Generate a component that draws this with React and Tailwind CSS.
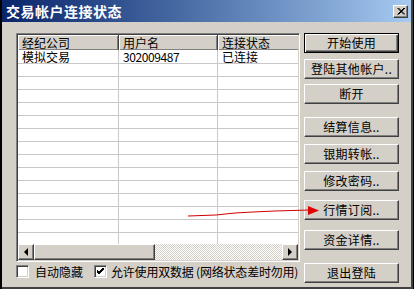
import React from 'react';

const raised =
  'bg-[#d4d0c8] border border-t-white border-l-white border-r-[#404040] border-b-[#404040] shadow-[inset_-1px_-1px_#808080]';

const buttons = [
  { label: '开始使用', cls: 'mt-[11px]', def: true },
  { label: '登陆其他帐户..', cls: 'mt-[6px]' },
  { label: '断开', cls: 'mt-[5px]' },
  { label: '结算信息..', cls: 'mt-[13px]' },
  { label: '银期转帐..', cls: 'mt-[7px]' },
  { label: '修改密码..', cls: 'mt-[7px]' },
  { label: '行情订阅..', cls: 'mt-[9px]' },
  { label: '资金详情..', cls: 'mt-[10px]' },
  { label: '退出登陆', cls: 'mt-[13px]' },
];

const WinButton = ({ label, cls, def }) => (
  <div
    className={`${cls} h-[20px] w-[95px] flex items-center justify-center text-[12px] leading-none text-black ${
      def
        ? 'bg-[#d4d0c8] border border-black shadow-[inset_1px_1px_#fff,inset_-1px_-1px_#404040,inset_-2px_-2px_#808080]'
        : raised
    }`}
  >
    <span className="tracking-[0.3px]">{label}</span>
  </div>
);

const Arrow = ({ dir }) => (
  <div className={`w-[16px] h-[16px] shrink-0 flex items-center justify-center ${raised}`}>
    <svg width="6" height="8" viewBox="0 0 6 8">
      {dir === 'left' ? <polygon points="5,0 5,8 1,4" fill="#000" /> : <polygon points="1,0 1,8 5,4" fill="#000" />}
    </svg>
  </div>
);

const ListView = () => {
  const rows = Array.from({ length: 15 });
  return (
    <div className="h-[229px] w-[284px] bg-white border border-t-[#808080] border-l-[#808080] border-r-white border-b-white shadow-[inset_1px_1px_#404040,inset_-1px_-1px_#d4d0c8] p-[1px] flex flex-col overflow-hidden">
      <div className="flex h-[15px] shrink-0 overflow-hidden">
        {[
          ['经纪公司', 'w-[101px]'],
          ['用户名', 'w-[99px]'],
          ['连接状态', 'w-[120px]'],
        ].map(([t, w]) => (
          <div
            key={t}
            className={`${w} shrink-0 h-[15px] bg-[#d4d0c8] border-r border-r-[#404040] shadow-[inset_1px_1px_#fff,inset_-1px_-1px_#808080] pl-[4px] flex items-center text-[12px] leading-none`}
          >
            {t}
          </div>
        ))}
      </div>
      <div className="flex-1 overflow-hidden">
        {rows.map((_, i) => (
          <div
            key={i}
            className={`flex ${i === 0 ? 'h-[14px]' : 'h-[13px]'} border-b border-[#c8c8c8] text-[12px] leading-[13px]`}
          >
            <div className="w-[101px] shrink-0 border-r border-[#c8c8c8] pl-[4px]">{i === 0 ? '模拟交易' : ''}</div>
            <div className="w-[99px] shrink-0 border-r border-[#c8c8c8] pl-[4px] tracking-[-0.4px]">{i === 0 ? '302009487' : ''}</div>
            <div className="w-[120px] shrink-0 pl-[4px]">{i === 0 ? '已连接' : ''}</div>
          </div>
        ))}
      </div>
      <div className="flex h-[16px] shrink-0">
        <Arrow dir="left" />
        <div className={`w-[121px] h-[16px] shrink-0 ${raised}`} />
        <div className="flex-1 h-[16px] bg-[repeating-conic-gradient(#d4d0c8_0%_25%,#ffffff_0%_50%)] bg-[length:2px_2px]" />
        <Arrow dir="right" />
      </div>
    </div>
  );
};

const CheckBox = ({ checked }) => (
  <div className="w-[13px] h-[13px] shrink-0 bg-white border border-t-[#808080] border-l-[#808080] border-r-white border-b-white shadow-[inset_1px_1px_#404040,inset_-1px_-1px_#d4d0c8] flex items-center justify-center">
    {checked && (
      <svg width="7" height="7" viewBox="0 0 7 7">
        <path d="M0 3 L2 5 L7 0 M0 4 L2 6 L7 1 M0 2 L2 4 L7 -1" stroke="#000" strokeWidth="1" fill="none" />
      </svg>
    )}
  </div>
);

export default function App() {
  return (
    <div className="relative w-[414px] h-[289px] bg-black overflow-hidden font-['Noto_Sans_CJK_SC','Noto_Sans',sans-serif] text-black">
      <div className="ml-[2px] w-[411px] h-[289px] bg-[#d4d0c8] border-r-2 border-b-2 border-r-[#404040] border-b-[#404040] flex flex-col">
        <div className="h-[22px] shrink-0 bg-linear-to-r from-[#0a246a] to-[#a6caf0] flex items-center justify-between pl-[4px] pr-[3px]">
          <span className="text-white font-bold text-[14px] leading-none tracking-[0.5px]">交易帐户连接状态</span>
          <div className={`w-[15px] h-[13px] flex items-center justify-center ${raised}`}>
            <svg width="8" height="7" viewBox="0 0 8 7">
              <path d="M0.5 0 L7 6.5 M1.5 0 L8 6.5 M7 0 L0.5 6.5 M8 0 L1.5 6.5" stroke="#000" strokeWidth="1" />
            </svg>
          </div>
        </div>
        <div className="flex flex-1">
          <div className="ml-[14px] mt-[11px] w-[284px] flex flex-col">
            <ListView />
            <div className="mt-[3px] h-[13px] flex items-center text-[12px] leading-none whitespace-nowrap">
              <CheckBox />
              <span className="ml-[6px]">自动隐藏</span>
              <div className="ml-[11px]">
                <CheckBox checked />
              </div>
              <span className="ml-[4px] tracking-[-0.2px]">允许使用双数据 (网络状态差时勿用)</span>
            </div>
          </div>
          <div className="ml-[4px] w-[95px] flex flex-col">
            {buttons.map((b) => (
              <WinButton key={b.label} {...b} />
            ))}
          </div>
        </div>
      </div>
      <svg className="absolute left-0 top-0 pointer-events-none" width="414" height="289">
        <polyline points="188,216 216,215 235,213 253,212 275,211 309,210" stroke="#d00000" strokeWidth="1" fill="none" />
        <polygon points="308,206 319,210.5 308,215" fill="#e00000" />
      </svg>
    </div>
  );
}
